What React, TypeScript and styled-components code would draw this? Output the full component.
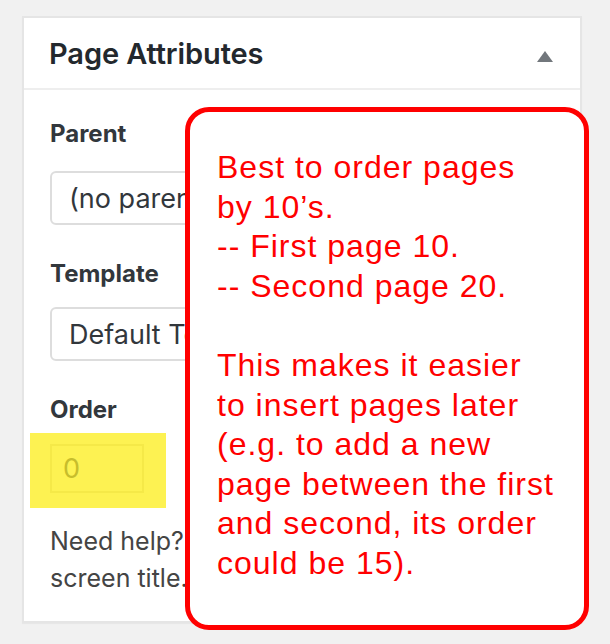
import React from 'react'
import styled, { createGlobalStyle } from 'styled-components'

const GlobalStyle = createGlobalStyle`
  html, body {
    margin: 0;
    padding: 0;
    background: #f1f1f1;
  }
  * {
    box-sizing: border-box;
  }
`

const Page = styled.div`
  position: relative;
  width: 610px;
  height: 644px;
  padding: 16px 0 0 22px;
  overflow: hidden;
  font-family: Inter, "Noto Sans", sans-serif;
`

const Panel = styled.div`
  width: 560px;
  background: #fff;
  border: 2px solid #e5e5e5;
  box-shadow: 0 1px 1px rgba(0, 0, 0, 0.04);
`

const PanelHeader = styled.div`
  height: 72px;
  display: flex;
  align-items: center;
  justify-content: space-between;
  padding: 0 27px 0 25px;
  border-bottom: 2px solid #eeeeee;
`

const PanelTitle = styled.h2`
  margin: 0;
  font-size: 29px;
  font-weight: 600;
  color: #23282d;
  letter-spacing: -0.1px;
`

const Toggle = styled.svg`
  width: 16px;
  height: 11px;
  margin-top: 6px;
`

const PanelBody = styled.div`
  padding: 0 26px 24px 26px;
`

const Label = styled.div<{ $top: number; $gap: number }>`
  margin-top: ${p => p.$top}px;
  margin-bottom: ${p => p.$gap}px;
  font-size: 24px;
  line-height: 32px;
  font-weight: 700;
  color: #32373c;
`

const Select = styled.div`
  width: 100%;
  height: 54px;
  display: flex;
  align-items: center;
  padding-left: 17px;
  border: 2px solid #dddddd;
  border-radius: 6px;
  font-size: 27px;
  color: #32373c;
  white-space: nowrap;
  overflow: hidden;
`

const Highlight = styled.div`
  display: inline-block;
  margin-left: -20px;
  padding: 11px 22px 15px 20px;
  background: #fdf252;
`

const NumberInput = styled.div`
  width: 94px;
  height: 49px;
  display: flex;
  align-items: center;
  padding-left: 11px;
  border: 2px solid rgba(190, 170, 0, 0.12);
  font-size: 27px;
  color: #c7bd2c;
`

const Help = styled.p`
  margin: 15px 0 0 0;
  font-size: 25px;
  line-height: 37px;
  color: #444444;
  white-space: nowrap;
`

const Note = styled.div`
  position: absolute;
  left: 185px;
  top: 107px;
  width: 404px;
  height: 523px;
  padding: 36px 0 0 27px;
  background: #fff;
  border: 5.5px solid #ff0000;
  border-radius: 24px;
  font-family: "Liberation Sans", Arial, Helvetica, sans-serif;
  font-size: 32px;
  line-height: 39.6px;
  letter-spacing: 1px;
  color: #ff0000;
  white-space: nowrap;
`

const NoteLine = styled.div`
  min-height: 39.6px;
`

const noteLines = [
  'Best to order pages',
  'by 10\u2019s.',
  '-- First page 10.',
  '-- Second page 20.',
  '',
  'This makes it easier',
  'to insert pages later',
  '(e.g. to add a new',
  'page between the first',
  'and second, its order',
  'could be 15).',
]

export default function App() {
  return (
    <>
      <GlobalStyle />
      <Page>
        <Panel>
          <PanelHeader>
            <PanelTitle>Page Attributes</PanelTitle>
            <Toggle viewBox="0 0 16 11">
              <polygon points="8,0 16,11 0,11" fill="#72777c" />
            </Toggle>
          </PanelHeader>
          <PanelBody>
            <Label $top={28} $gap={21}>Parent</Label>
            <Select>(no parent)</Select>
            <Label $top={33} $gap={17}>Template</Label>
            <Select>Default Template</Select>
            <Label $top={33} $gap={7}>Order</Label>
            <Highlight>
              <NumberInput>0</NumberInput>
            </Highlight>
            <Help>
              Need help? Use the Help tab above the
              <br />
              screen title.
            </Help>
          </PanelBody>
        </Panel>
        <Note>
          {noteLines.map((line, i) => (
            <NoteLine key={i}>{line}</NoteLine>
          ))}
        </Note>
      </Page>
    </>
  )
}
